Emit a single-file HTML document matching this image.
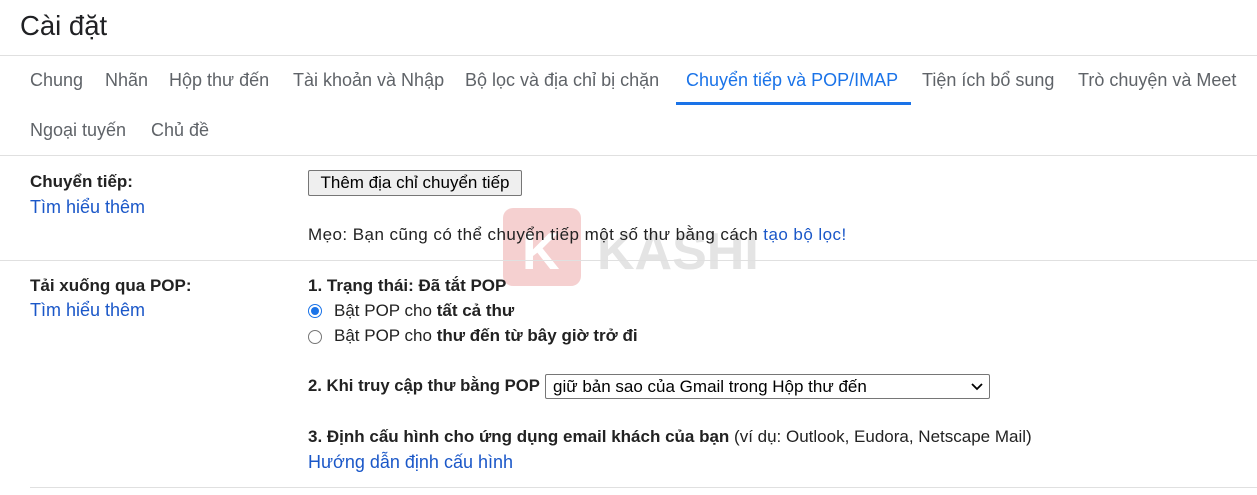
<!DOCTYPE html>
<html><head><meta charset="utf-8"><style>
body{margin:0;width:1257px;height:495px;background:#fff;font-family:"Liberation Sans",Arial,sans-serif;color:#222;position:relative;overflow:hidden}
.a{position:absolute;white-space:nowrap}
.t{font-size:18px;color:#5f6368;top:70px}
.t2{top:120px}
.hr{position:absolute;left:0;right:0;height:1px;background:#e0e0e0}
.b{font-size:17px}
.lk{color:#1a57c8}
.bold{font-weight:bold}
</style></head><body>
<div class="a" style="left:20px;top:10px;font-size:27.5px;color:#202124">Cài đặt</div>
<div class="hr" style="top:55px"></div>
<div class="a t" style="left:30px">Chung</div>
<div class="a t" style="left:105px">Nhãn</div>
<div class="a t" style="left:169px">Hộp thư đến</div>
<div class="a t" style="left:293px">Tài khoản và Nhập</div>
<div class="a t" style="left:465px">Bộ lọc và địa chỉ bị chặn</div>
<div class="a t" style="left:686px;color:#1a73e8">Chuyển tiếp và POP/IMAP</div>
<div style="position:absolute;left:676px;width:235px;top:102px;height:3px;background:#1a73e8"></div>
<div class="a t" style="left:922px">Tiện ích bổ sung</div>
<div class="a t" style="left:1078px">Trò chuyện và Meet</div>
<div class="a t t2" style="left:30px">Ngoại tuyến</div>
<div class="a t t2" style="left:151px">Chủ đề</div>
<div class="hr" style="top:155px"></div>

<div style="position:absolute;left:503px;top:208px;width:78px;height:78px;background:#f2c4c4;border-radius:10px;opacity:.8"></div>
<div class="a" style="left:522px;top:222px;font-size:52px;font-weight:bold;color:#fff">K</div>
<div class="a" style="left:597px;top:222px;font-size:52px;font-weight:bold;color:#e4e4e4">KASHI</div>

<div class="a b bold" style="left:30px;top:172px">Chuyển tiếp:</div>
<div class="a b lk" style="left:30px;top:197px;font-size:18px">Tìm hiểu thêm</div>
<div class="a" style="left:308px;top:170px;width:212px;height:24px;border:1px solid #767676;background:#efefef;border-radius:2px;font-size:17px;text-align:center;line-height:24px;color:#000">Thêm địa chỉ chuyển tiếp</div>
<div class="a b" style="left:308px;top:225px;letter-spacing:.45px">Mẹo: Bạn cũng có thể chuyển tiếp một số thư bằng cách <span class="lk">tạo bộ lọc!</span></div>
<div class="hr" style="top:260px"></div>

<div class="a b bold" style="left:30px;top:276px">Tải xuống qua POP:</div>
<div class="a b lk" style="left:30px;top:300px;font-size:18px">Tìm hiểu thêm</div>
<div class="a b bold" style="left:308px;top:276px">1. Trạng thái: Đã tắt POP</div>
<div style="position:absolute;left:308px;top:304px;width:12px;height:12px;border:1px solid #1a73e8;border-radius:50%;background:#fff"></div>
<div style="position:absolute;left:311px;top:307px;width:8px;height:8px;border-radius:50%;background:#1a73e8"></div>
<div class="a b" style="left:334px;top:301px">Bật POP cho <b>tất cả thư</b></div>
<div style="position:absolute;left:308px;top:330px;width:12px;height:12px;border:1px solid #767676;border-radius:50%"></div>
<div class="a b" style="left:334px;top:326px">Bật POP cho <b>thư đến từ bây giờ trở đi</b></div>
<div class="a b bold" style="left:308px;top:376px;font-size:16.7px">2. Khi truy cập thư bằng POP</div>
<div style="position:absolute;left:545px;top:374px;border:1px solid #767676;border-radius:2px;font-size:17px;line-height:23px;padding-left:7px;box-sizing:border-box;width:445px;height:25px;color:#000">giữ bản sao của Gmail trong Hộp thư đến<svg style="position:absolute;right:6px;top:8px" width="12" height="8"><path d="M1 1l5 5 5-5" stroke="#000" stroke-width="1.8" fill="none"/></svg></div>
<div class="a b" style="left:308px;top:427px"><b>3. Định cấu hình cho ứng dụng email khách của bạn</b> (ví dụ: Outlook, Eudora, Netscape Mail)</div>
<div class="a b lk" style="left:308px;top:452px;font-size:18px">Hướng dẫn định cấu hình</div>
<div class="hr" style="top:487px;left:30px"></div>
</body></html>
